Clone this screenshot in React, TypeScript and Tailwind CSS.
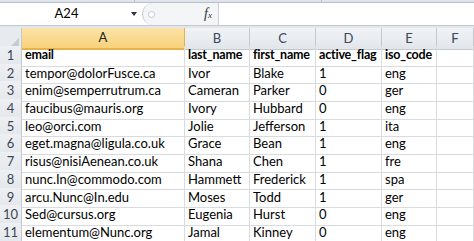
import React from 'react';

const cols = ['A', 'B', 'C', 'D', 'E', 'F'];

const rows: string[][] = [
  ['email', 'last_name', 'first_name', 'active_flag', 'iso_code'],
  ['tempor@dolorFusce.ca', 'Ivor', 'Blake', '1', 'eng'],
  ['enim@semperrutrum.ca', 'Cameran', 'Parker', '0', 'ger'],
  ['faucibus@mauris.org', 'Ivory', 'Hubbard', '0', 'eng'],
  ['leo@orci.com', 'Jolie', 'Jefferson', '1', 'ita'],
  ['eget.magna@ligula.co.uk', 'Grace', 'Bean', '1', 'eng'],
  ['risus@nisiAenean.co.uk', 'Shana', 'Chen', '1', 'fre'],
  ['nunc.In@commodo.com', 'Hammett', 'Frederick', '1', 'spa'],
  ['arcu.Nunc@In.edu', 'Moses', 'Todd', '1', 'ger'],
  ['Sed@cursus.org', 'Eugenia', 'Hurst', '0', 'eng'],
  ['elementum@Nunc.org', 'Jamal', 'Kinney', '0', 'eng'],
];

const grid = 'grid grid-cols-[22px_163px_65px_66px_66px_55px_1fr]';

export default function App() {
  return (
    <div className="w-[474px] h-[241px] overflow-hidden bg-white font-['Lato',sans-serif] text-black">
      {/* ribbon edge */}
      <div className="h-[3px] bg-[#dfe4ea] border-b border-[#b8c0cb] flex">
        <div className="w-[135px] border-r border-[#b8c0cb]" />
        <div className="w-[187px] border-r border-[#b8c0cb]" />
      </div>

      {/* formula bar */}
      <div className="h-[22px] flex items-stretch bg-white">
        <div className="w-[142px] flex items-center">
          <span className="flex-1 text-center text-[13px] pl-[2px]">A24</span>
          <span className="w-0 h-0 mr-[5px] border-l-[3px] border-r-[3px] border-t-[4px] border-l-transparent border-r-transparent border-t-[#333]" />
        </div>
        <div className="w-[76px] flex items-center bg-[#f4f5f7] border-l border-[#c9ced6] rounded-l-full">
          <span className="ml-[5px] w-[7px] h-[7px] rounded-full border border-[#c2c7cf] bg-white" />
          <span className="ml-auto mr-[6px] italic font-['Liberation_Serif',serif] text-[14px] leading-none text-[#333]">
            f<span className="text-[9px]">x</span>
          </span>
        </div>
        <div className="flex-1 border-l border-[#c9ced6]" />
      </div>

      <div className="h-[3px] bg-[#e3e7ec] border-t border-[#c3c9d1]" />

      {/* column headers */}
      <div className={`${grid} h-[18px]`}>
        <div className="bg-[#e7eaee] border-r border-b border-[#c4c9d0] flex items-end justify-end p-[2px]">
          <svg width="9" height="9" viewBox="0 0 9 9">
            <path d="M9 0 L9 9 L0 9 Z" fill="#c6cbd2" />
          </svg>
        </div>
        {cols.map((c) => (
          <div
            key={c}
            className={
              c === 'A'
                ? 'bg-gradient-to-b from-[#fbe3a6] to-[#f8d27a] border-r border-b-2 border-[#e8b04a] flex items-center justify-center text-[13px] text-[#222]'
                : 'bg-gradient-to-b from-[#f1f3f6] to-[#e2e6eb] border-r border-b border-[#c4c9d0] flex items-center justify-center text-[13px] text-[#3b4656]'
            }
          >
            {c}
          </div>
        ))}
      </div>

      {/* data rows */}
      {rows.map((r, i) => (
        <div key={i} className={`${grid} h-[17.7px]`}>
          <div className="bg-gradient-to-b from-[#eef0f3] to-[#e4e7eb] border-r border-b border-[#c4c9d0] flex items-center justify-center text-[13px] text-[#3b4656]">
            {i + 1}
          </div>
          {r.map((v, j) => (
            <div
              key={j}
              className={`border-r border-b border-[#d8dbe0] flex items-center pl-[3px] whitespace-nowrap overflow-visible ${i === 0 ? 'font-bold text-[12.5px] tracking-[-0.2px]' : 'text-[13px]'}`}
            >
              {v}
            </div>
          ))}
          <div className="border-r border-b border-[#d8dbe0]" />
        </div>
      ))}
    </div>
  );
}
